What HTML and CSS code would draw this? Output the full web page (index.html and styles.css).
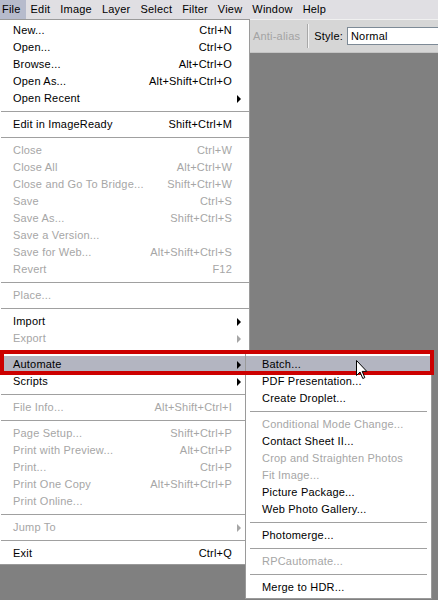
FILE: index.html
```html
<!DOCTYPE html>
<html lang="en">

<head>
    <meta charset="UTF-8">
    <meta name="viewport" content="width=device-width, initial-scale=1.0">
    <title>File menu</title>
    <link rel="stylesheet" href="styles.css">
</head>

<body>

    <div class="menubar">
        <span class="top-item open">File</span>
        <span class="top-item">Edit</span>
        <span class="top-item">Image</span>
        <span class="top-item">Layer</span>
        <span class="top-item">Select</span>
        <span class="top-item">Filter</span>
        <span class="top-item">View</span>
        <span class="top-item">Window</span>
        <span class="top-item">Help</span>
    </div>

    <div class="options">
        <span class="opt-label off">Anti-alias</span>
        <span class="opt-divider"></span>
        <span class="opt-label">Style:</span>
        <span class="opt-field">Normal</span>
    </div>

    <div class="canvas"></div>

    <!-- File menu -->
    <div class="menu file-menu">
        <div class="item"><span>New...</span><span class="key">Ctrl+N</span></div>
        <div class="item"><span>Open...</span><span class="key">Ctrl+O</span></div>
        <div class="item"><span>Browse...</span><span class="key">Alt+Ctrl+O</span></div>
        <div class="item"><span>Open As...</span><span class="key">Alt+Shift+Ctrl+O</span></div>
        <div class="item"><span>Open Recent</span><span class="key"></span><span class="arrow"></span></div>
        <div class="sep"></div>
        <div class="item"><span>Edit in ImageReady</span><span class="key">Shift+Ctrl+M</span></div>
        <div class="sep"></div>
        <div class="item off"><span>Close</span><span class="key">Ctrl+W</span></div>
        <div class="item off"><span>Close All</span><span class="key">Alt+Ctrl+W</span></div>
        <div class="item off"><span>Close and Go To Bridge...</span><span class="key">Shift+Ctrl+W</span></div>
        <div class="item off"><span>Save</span><span class="key">Ctrl+S</span></div>
        <div class="item off"><span>Save As...</span><span class="key">Shift+Ctrl+S</span></div>
        <div class="item off"><span>Save a Version...</span><span class="key"></span></div>
        <div class="item off"><span>Save for Web...</span><span class="key">Alt+Shift+Ctrl+S</span></div>
        <div class="item off"><span>Revert</span><span class="key">F12</span></div>
        <div class="sep"></div>
        <div class="item off"><span>Place...</span><span class="key"></span></div>
        <div class="sep"></div>
        <div class="item"><span>Import</span><span class="key"></span><span class="arrow"></span></div>
        <div class="item off"><span>Export</span><span class="key"></span><span class="arrow"></span></div>
        <div class="sep"></div>
        <div class="item hover"><span>Automate</span><span class="key"></span><span class="arrow"></span></div>
        <div class="item"><span>Scripts</span><span class="key"></span><span class="arrow"></span></div>
        <div class="sep"></div>
        <div class="item off"><span>File Info...</span><span class="key">Alt+Shift+Ctrl+I</span></div>
        <div class="sep"></div>
        <div class="item off"><span>Page Setup...</span><span class="key">Shift+Ctrl+P</span></div>
        <div class="item off"><span>Print with Preview...</span><span class="key">Alt+Ctrl+P</span></div>
        <div class="item off"><span>Print...</span><span class="key">Ctrl+P</span></div>
        <div class="item off"><span>Print One Copy</span><span class="key">Alt+Shift+Ctrl+P</span></div>
        <div class="item off"><span>Print Online...</span><span class="key"></span></div>
        <div class="sep"></div>
        <div class="item off"><span>Jump To</span><span class="key"></span><span class="arrow"></span></div>
        <div class="sep"></div>
        <div class="item"><span>Exit</span><span class="key">Ctrl+Q</span></div>
    </div>

    <!-- Automate submenu -->
    <div class="menu sub-menu">
        <div class="item hover"><span>Batch...</span></div>
        <div class="item"><span>PDF Presentation...</span></div>
        <div class="item"><span>Create Droplet...</span></div>
        <div class="sep"></div>
        <div class="item off"><span>Conditional Mode Change...</span></div>
        <div class="item"><span>Contact Sheet II...</span></div>
        <div class="item off"><span>Crop and Straighten Photos</span></div>
        <div class="item off"><span>Fit Image...</span></div>
        <div class="item"><span>Picture Package...</span></div>
        <div class="item"><span>Web Photo Gallery...</span></div>
        <div class="sep"></div>
        <div class="item"><span>Photomerge...</span></div>
        <div class="sep"></div>
        <div class="item off"><span>RPCautomate...</span></div>
        <div class="sep"></div>
        <div class="item"><span>Merge to HDR...</span></div>
    </div>

    <!-- red marker around the Automate > Batch path -->
    <div class="mark"></div>

    <svg class="pointer" width="12" height="20" viewBox="0 0 12 20">
        <path d="M0.5 0.5 L0.5 15.5 L4 12 L6.8 18.5 L8.8 17.6 L6.2 11.4 L10.8 11.4 Z" fill="#fff" stroke="#000" stroke-width="1" />
    </svg>

</body>

</html>
```

FILE: styles.css
```css
* {
    box-sizing: border-box;
}

body {
    font-family: "Liberation Sans", Arial, sans-serif;
    font-size: 11px;
    letter-spacing: 0.2px;
    background-color: #808080;
    margin: 0;
    padding: 0;
    width: 438px;
    height: 600px;
    overflow: hidden;
    position: relative;
}

/* Menu bar */
.menubar {
    display: flex;
    height: 19px;
    background-color: #e0dfe3;
    line-height: 19px;
    color: #000;
}

.top-item {
    padding: 0 5px;
}

.top-item:first-child {
    padding-left: 2px;
    padding-right: 5px;
}

.top-item.open {
    background-color: #b6bbcc;
}

/* Tool options bar */
.options {
    display: flex;
    align-items: center;
    height: 34px;
    padding-left: 253px;
    background-color: #d6d6d6;
    border-top: 1px solid #f0f0f0;
    border-bottom: 1px solid #c4c4c4;
}

.opt-label {
    color: #000;
}

.opt-label.off {
    color: #a3a3a3;
}

.opt-divider {
    width: 2px;
    height: 24px;
    margin: 0 5px 0 7px;
    border-left: 1px solid #a8a8a8;
    border-right: 1px solid #f4f4f4;
}

.opt-field {
    flex: 1;
    height: 18px;
    line-height: 16px;
    margin-left: 4px;
    padding-left: 3px;
    background-color: #fff;
    border: 1px solid #7d8a96;
    border-right: none;
}

/* Menus */
.menu {
    position: absolute;
    background-color: #fff;
    border: 1px solid #9a9a9a;
    padding: 2px 0;
    color: #000;
}

.file-menu {
    left: -4px;
    top: 19px;
    width: 254px;
}

.sub-menu {
    left: 245px;
    top: 353px;
    width: 187px;
}

.item {
    display: grid;
    grid-template-columns: 1fr auto 17px;
    height: 17px;
    line-height: 17px;
    padding-left: 16px;
    white-space: nowrap;
}

.sub-menu .item {
    grid-template-columns: 1fr;
}

.item.off {
    color: #a6a6a6;
}

.item.hover {
    background-color: #b3b5c1;
}

.arrow {
    width: 0;
    height: 0;
    margin: 5px 0 0 5px;
    border-left: 4px solid #000;
    border-top: 4px solid transparent;
    border-bottom: 4px solid transparent;
}

.item.off .arrow {
    border-left-color: #a6a6a6;
}

.key:empty + .arrow {
    grid-column: 3;
}

.sep {
    height: 1px;
    margin: 4px 4px;
    background-color: #a0a0a0;
}

.file-menu .sep {
    margin: 4px 0 4px 4px;
}

.mark {
    position: absolute;
    left: 0;
    top: 350px;
    width: 434px;
    height: 25px;
    border: 4px solid #cc0000;
}

.pointer {
    position: absolute;
    left: 356px;
    top: 360px;
}
```
